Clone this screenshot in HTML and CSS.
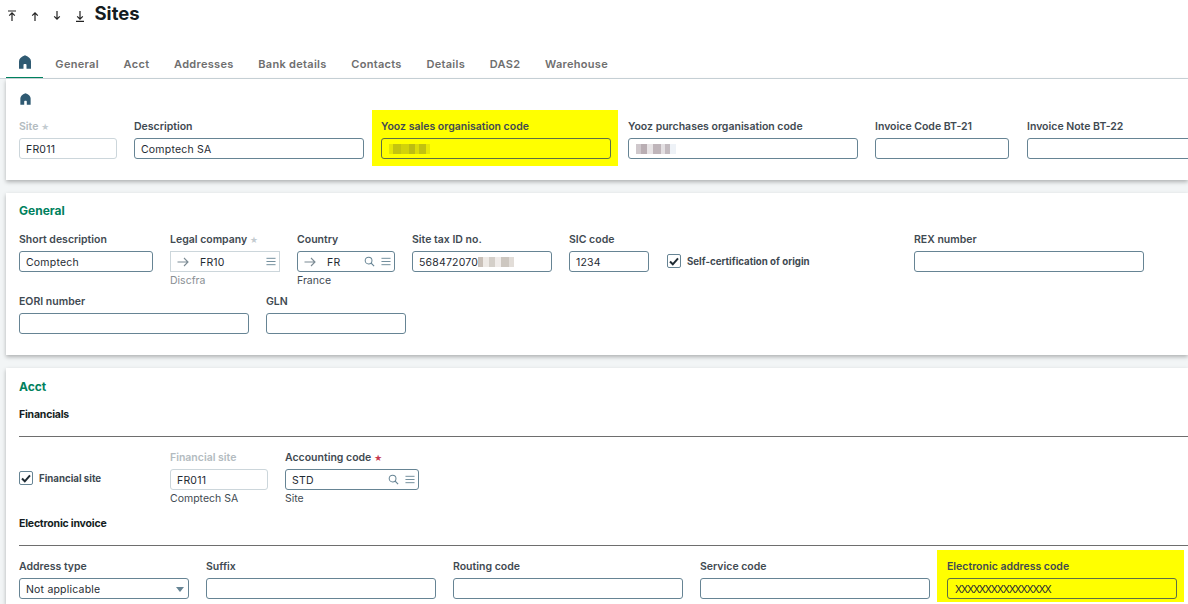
FILE: index.html
```html
<!DOCTYPE html>
<html lang="en">
<head>
  <meta charset="UTF-8" />
  <title>Sites</title>
  <link rel="stylesheet" href="styles.css">
</head>
<body>
  <svg class="icon-defs" width="0" height="0">
    <symbol id="home" viewBox="0 0 14 14"><path d="M7 0.3 Q1 2.5 1 6.5 L1 13.7 5.5 13.7 5.5 10 Q5.5 9 6.3 9 L7.7 9 Q8.5 9 8.5 10 L8.5 13.7 13 13.7 13 6.5 Q13 2.5 7 0.3Z" fill="currentColor"/></symbol>
    <symbol id="lookup" viewBox="0 0 12 12"><circle cx="5" cy="5" r="3.7" fill="none" stroke="currentColor" stroke-width="1.1"/><path d="M7.8 7.8 11 11" stroke="currentColor" stroke-width="1.3"/></symbol>
    <symbol id="menu" viewBox="0 0 11 9"><path d="M0.5 1H10.5M0.5 4.5H10.5M0.5 8H10.5" stroke="currentColor" stroke-width="1"/></symbol>
    <symbol id="arrow" viewBox="0 0 12 10"><path d="M0.5 5H11M7 1 11 5 7 9" fill="none" stroke="currentColor" stroke-width="1.1"/></symbol>
    <symbol id="check" viewBox="0 0 10 9"><path d="M1 4.5 3.8 7.3 9 1.3" fill="none" stroke="currentColor" stroke-width="2"/></symbol>
  </svg>

  <header class="top-bar">
    <div class="nav-arrows">
      <svg class="nav-arrow" viewBox="0 0 10 12"><path d="M1 1H9M5 11V3M2.2 5.6 5 2.8 7.8 5.6" fill="none" stroke="#222" stroke-width="1.2"/></svg>
      <svg class="nav-arrow" viewBox="0 0 10 12"><path d="M5 11V3M2.2 5.6 5 2.8 7.8 5.6" fill="none" stroke="#222" stroke-width="1.2"/></svg>
      <svg class="nav-arrow" viewBox="0 0 10 12"><path d="M5 1V9M2.2 6.4 5 9.2 7.8 6.4" fill="none" stroke="#222" stroke-width="1.2"/></svg>
      <svg class="nav-arrow" viewBox="0 0 10 12"><path d="M5 1V9M2.2 6.4 5 9.2 7.8 6.4M1 11.3H9" fill="none" stroke="#222" stroke-width="1.2"/></svg>
    </div>
    <h1>Sites</h1>
  </header>

  <nav class="tabs">
    <a class="tab tab-home selected"><svg class="home-icon"><use href="#home"/></svg></a>
    <a class="tab">General</a>
    <a class="tab">Acct</a>
    <a class="tab">Addresses</a>
    <a class="tab">Bank details</a>
    <a class="tab">Contacts</a>
    <a class="tab">Details</a>
    <a class="tab">DAS2</a>
    <a class="tab">Warehouse</a>
  </nav>

  <section class="card card-home">
    <svg class="home-icon card-icon"><use href="#home"/></svg>
    <div class="row row-home">
      <div class="field w98 disabled">
        <label>Site <span class="req">★</span></label>
        <div class="input">FR011</div>
      </div>
      <div class="field w230">
        <label>Description</label>
        <div class="input">Comptech SA</div>
      </div>
      <div class="field w230 marked marked-top">
        <label>Yooz sales organisation code</label>
        <div class="input"><span class="smudge smudge-yellow"></span></div>
      </div>
      <div class="field w230">
        <label>Yooz purchases organisation code</label>
        <div class="input"><span class="smudge smudge-grey"></span></div>
      </div>
      <div class="field w134">
        <label>Invoice Code BT-21</label>
        <div class="input"></div>
      </div>
      <div class="field w230 last-home">
        <label>Invoice Note BT-22</label>
        <div class="input"></div>
      </div>
    </div>
  </section>

  <section class="card card-general">
    <h2>General</h2>
    <div class="row">
      <div class="field w134">
        <label>Short description</label>
        <div class="input">Comptech</div>
      </div>
      <div class="field w110 greyed">
        <label>Legal company <span class="req">★</span></label>
        <div class="input square">
          <svg class="arrow"><use href="#arrow"/></svg>
          <span class="code">FR10</span>
          <svg class="menu"><use href="#menu"/></svg>
        </div>
        <p class="hint">Discfra</p>
      </div>
      <div class="field w98">
        <label>Country</label>
        <div class="input">
          <svg class="arrow"><use href="#arrow"/></svg>
          <span class="code">FR</span>
          <svg class="lookup"><use href="#lookup"/></svg>
          <svg class="menu"><use href="#menu"/></svg>
        </div>
        <p class="hint">France</p>
      </div>
      <div class="field w140">
        <label>Site tax ID no.</label>
        <div class="input">568472070<span class="smudge smudge-tax"></span></div>
      </div>
      <div class="field w80">
        <label>SIC code</label>
        <div class="input">1234</div>
      </div>
      <div class="check check-origin">
        <span class="box"><svg class="tick"><use href="#check"/></svg></span>
        <span>Self-certification of origin</span>
      </div>
      <div class="field w230">
        <label>REX number</label>
        <div class="input"></div>
      </div>
    </div>
    <div class="row row-second">
      <div class="field w230">
        <label>EORI number</label>
        <div class="input"></div>
      </div>
      <div class="field w140">
        <label>GLN</label>
        <div class="input"></div>
      </div>
    </div>
  </section>

  <section class="card card-acct">
    <h2>Acct</h2>
    <h3 class="block-title">Financials</h3>
    <hr>
    <div class="row row-fin">
      <div class="check check-fin">
        <span class="box"><svg class="tick"><use href="#check"/></svg></span>
        <span>Financial site</span>
      </div>
      <div class="field w98 disabled">
        <label>Financial site</label>
        <div class="input">FR011</div>
        <p class="hint">Comptech SA</p>
      </div>
      <div class="field w134">
        <label>Accounting code <span class="req red">★</span></label>
        <div class="input">
          <span>STD</span>
          <svg class="lookup"><use href="#lookup"/></svg>
          <svg class="menu"><use href="#menu"/></svg>
        </div>
        <p class="hint">Site</p>
      </div>
    </div>
    <h3 class="block-title title-invoice">Electronic invoice</h3>
    <hr class="rule-invoice">
    <div class="row row-invoice">
      <div class="field w170">
        <label>Address type</label>
        <div class="input">Not applicable<span class="caret"></span></div>
      </div>
      <div class="field w230">
        <label>Suffix</label>
        <div class="input"></div>
      </div>
      <div class="field w230">
        <label>Routing code</label>
        <div class="input"></div>
      </div>
      <div class="field w230">
        <label>Service code</label>
        <div class="input"></div>
      </div>
      <div class="field w230 marked marked-bottom">
        <label>Electronic address code</label>
        <div class="input tight">XXXXXXXXXXXXXXXX</div>
      </div>
    </div>
  </section>
</body>
</html>
```

FILE: styles.css
```css
html, body {
  height: 604px;
  overflow: hidden;
}
body {
  margin: 0;
  width: 1188px;
  background-color: #f2f5f6;
  font-family: "Inter", "Liberation Sans", sans-serif;
  color: #1f2b33;
}
.icon-defs {
  position: absolute;
}
.top-bar {
  height: 50px;
  background-color: #fff;
  display: flex;
  align-items: flex-start;
  padding-left: 7px;
}
.nav-arrows {
  display: flex;
  gap: 12.5px;
  padding-top: 10px;
}
.nav-arrow {
  width: 10px;
  height: 12px;
}
h1 {
  margin: 1px 0 0 10px;
  font-size: 18.5px;
  line-height: 24px;
  font-weight: 700;
  color: #141c21;
}
.tabs {
  height: 28px;
  background-color: #fff;
  display: flex;
  border-bottom: 1px solid #ccd6db;
  padding-left: 6px;
}
.tab {
  height: 28px;
  box-sizing: border-box;
  padding: 7px 12.35px 0;
  font-size: 11px;
  line-height: 14px;
  font-weight: 600;
  letter-spacing: 0.3px;
  color: #6e6e6e;
}
.tab-home {
  width: 37px;
  padding: 5px 0 0 12px;
  color: #2f5a72;
}
.tab.selected {
  border-bottom: 1px solid #00815d;
}
.home-icon {
  display: block;
  width: 14px;
  height: 14px;
  color: #2f5a72;
}
.card-icon {
  width: 13px;
  height: 12px;
}
.card {
  margin-left: 6px;
  width: 1182px;
  overflow: hidden;
  background-color: #fff;
  padding-left: 13px;
  box-sizing: border-box;
  box-shadow: 0 2px 4px rgba(0, 0, 0, 0.28);
}
.card-home {
  height: 101px;
  padding-top: 14px;
  margin-bottom: 13px;
}
.card-general {
  height: 162px;
  padding-top: 10px;
  margin-bottom: 13px;
}
.card-acct {
  height: 236px;
  padding-top: 11px;
}
h2 {
  margin: 0;
  font-size: 12px;
  line-height: 16px;
  font-weight: 700;
  color: #00815d;
}
.row {
  display: flex;
  gap: 17px;
}
.row-home {
  margin-top: 15px;
}
.card-general .row {
  margin-top: 14px;
}
.card-general .row.row-second {
  margin-top: 7px;
}
.field {
  flex: none;
  position: relative;
}
.w80 { width: 80px; }
.w98 { width: 98px; }
.w110 { width: 110px; }
.w134 { width: 134px; }
.w140 { width: 140px; }
.w170 { width: 170px; }
.w230 { width: 230px; }
.last-home {
  margin-left: 1px;
}
label {
  display: block;
  height: 18px;
  font-size: 10.5px;
  line-height: 14px;
  font-weight: 600;
  color: #3f4a52;
  white-space: nowrap;
}
.req {
  font-size: 8px;
  color: #c3cbd0;
}
.req.red {
  color: #c7384f;
}
.input {
  height: 21px;
  box-sizing: border-box;
  border: 1px solid #668494;
  border-radius: 3px;
  background-color: #fff;
  display: flex;
  align-items: center;
  padding: 1px 6px 0;
  font-size: 10.5px;
  letter-spacing: 0.2px;
  color: #1f2b33;
  white-space: nowrap;
}
.input.tight {
  letter-spacing: -1.2px;
  padding-left: 7px;
}
.disabled label {
  color: #b3bbc0;
}
.disabled .input, .greyed .input {
  border-color: #ccd6db;
}
.input.square {
  border-radius: 0;
}
.greyed .hint {
  color: #8a8f93;
}
.hint {
  margin: 2px 0 0;
  font-size: 10.5px;
  line-height: 14px;
  color: #3f4a52;
}
.arrow {
  width: 12px;
  height: 10px;
  flex: none;
  color: #7b8a93;
  margin-top: -1px;
}
.code {
  margin-left: 11px;
}
.lookup {
  width: 11px;
  height: 11px;
  flex: none;
  color: #668494;
  margin: -2px 0 0 auto;
}
.menu {
  width: 10px;
  height: 9px;
  flex: none;
  color: #668494;
  margin: -2px -3px 0 6px;
}
.square .menu {
  margin-left: auto;
}
.marked::before {
  content: "";
  position: absolute;
  z-index: 0;
  background-color: #ffff00;
}
.marked > * {
  position: relative;
  z-index: 1;
}
.marked .input {
  background-color: transparent;
  border-color: #5e6f45;
}
.marked-top::before {
  left: -9px;
  right: -7px;
  top: -10px;
  bottom: -7px;
}
.marked-bottom::before {
  left: -10px;
  right: -7px;
  top: -10px;
  bottom: -3px;
}
.smudge {
  display: block;
  height: 10px;
}
.smudge-yellow {
  width: 41px;
  margin-left: 1px;
  background: linear-gradient(90deg, #e6e605 0 4px, #c4c40e 4px 12px, #d2d20a 12px 20px, #bdbd12 20px 26px, #dcdc08 26px 30px, #c2c210 30px 37px, #e8e804 37px);
}
.smudge-grey {
  width: 40px;
  margin-left: 1px;
  background: linear-gradient(90deg, #cfc8cc 0 5px, #b9aeb3 5px 11px, #e8e4e6 11px 17px, #bfb5ba 17px 25px, #e4e0e3 25px 29px, #c3bbc0 29px 34px, #eef2f7 34px);
}
.smudge-tax {
  width: 36px;
  background: linear-gradient(90deg, #c9c0b8 0 5px, #eeeae6 5px 11px, #d4cfc9 11px 17px, #f0ecea 17px 23px, #cdc7c0 23px 31px, #e2ddd8 31px);
}
.check {
  display: flex;
  align-items: center;
  gap: 6px;
  font-size: 9.7px;
  font-weight: 700;
  color: #3f4a52;
  white-space: nowrap;
}
.check-origin {
  width: 231px;
  box-sizing: border-box;
  padding-left: 1px;
  margin-top: 18px;
  height: 20px;
}
.box {
  flex: none;
  width: 14px;
  height: 14px;
  box-sizing: border-box;
  border: 1px solid #668494;
  border-radius: 2px;
  display: flex;
  align-items: center;
  justify-content: center;
}
.tick {
  width: 10px;
  height: 9px;
  color: #1f2b33;
}
.block-title {
  margin: 13px 0 0;
  font-size: 10.5px;
  line-height: 14px;
  font-weight: 700;
  letter-spacing: -0.2px;
  color: #141c21;
}
hr {
  margin: 14px 0 0;
  border: none;
  border-top: 1px solid #6e6e6e;
}
hr.rule-invoice {
  margin-top: 14px;
}
.row-fin {
  margin-top: 14px;
}
.check-fin {
  width: 134px;
  margin-top: 17px;
  height: 20px;
}
.title-invoice {
  margin-top: 11px;
}
.row-invoice {
  margin-top: 14px;
}
.caret {
  width: 0;
  height: 0;
  margin: 0 -2px 0 auto;
  border-left: 4px solid transparent;
  border-right: 4px solid transparent;
  border-top: 5px solid #668494;
}
.marked-bottom {
  align-self: flex-start;
}
```
